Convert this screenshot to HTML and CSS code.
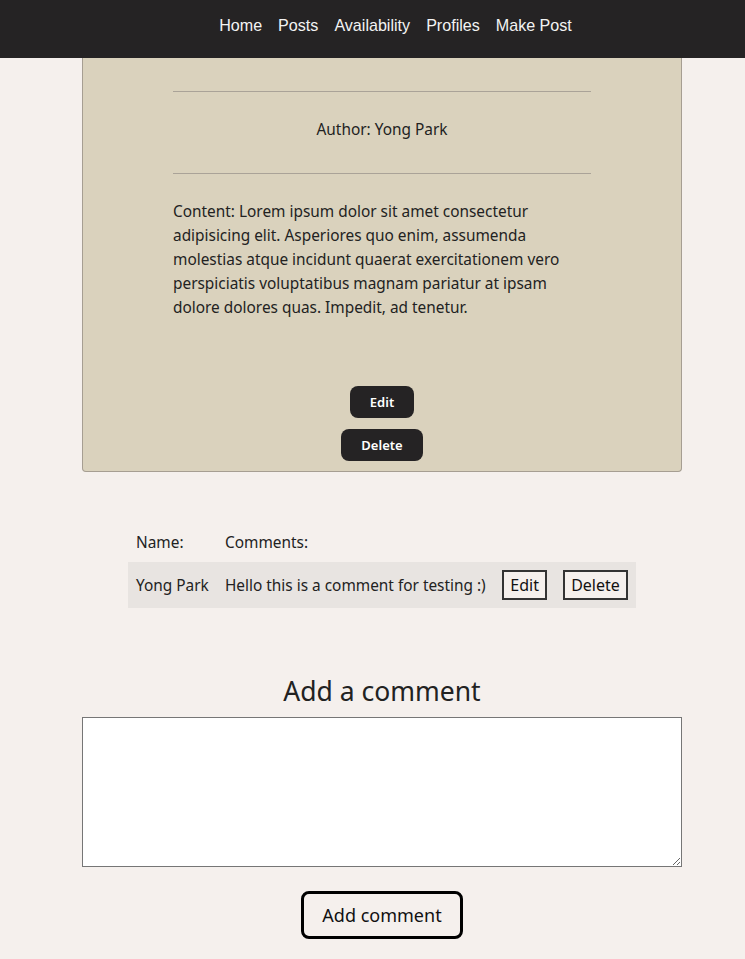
FILE: index.html
```html
<!DOCTYPE html>
<html>
<head>
<meta charset="utf-8">
<link rel="stylesheet" href="styles.css">
</head>
<body>
<nav class="nav">
  <a href="#">Home</a>
  <a href="#">Posts</a>
  <a href="#">Availability</a>
  <a href="#">Profiles</a>
  <a href="#">Make Post</a>
</nav>
<main class="main">
  <section class="card">
    <hr class="rule">
    <p class="author">Author: Yong Park</p>
    <hr class="rule">
    <p class="content">Content: Lorem ipsum dolor sit amet consectetur adipisicing elit. Asperiores quo enim, assumenda molestias atque incidunt quaerat exercitationem vero perspiciatis voluptatibus magnam pariatur at ipsam dolore dolores quas. Impedit, ad tenetur.</p>
    <div class="card-actions">
      <button class="dark-btn">Edit</button>
      <button class="dark-btn">Delete</button>
    </div>
  </section>
  <table class="comments">
    <thead>
      <tr><th>Name:</th><th>Comments:</th><th></th><th></th></tr>
    </thead>
    <tbody>
      <tr class="crow">
        <td>Yong Park</td>
        <td>Hello this is a comment for testing :)</td>
        <td><button class="small-btn">Edit</button></td>
        <td><button class="small-btn">Delete</button></td>
      </tr>
    </tbody>
  </table>
  <h2 class="add-title">Add a comment</h2>
  <textarea class="box"></textarea>
  <button class="add-btn">Add comment</button>
</main>
</body>
</html>
```
FILE: styles.css
```css
html, body {
  margin: 0;
  padding: 0;
}
body {
  background: #f5f0ed;
  font-family: "Noto Sans", "Open Sans", sans-serif;
  color: #222;
}
.nav {
  height: 58px;
  background: #252324;
  display: flex;
  justify-content: center;
  align-items: center;
  gap: 16px;
  padding: 0 0 8px 46px;
  box-sizing: border-box;
  font-family: "Liberation Sans", Arial, sans-serif;
}
.nav a {
  color: #f3f3f3;
  text-decoration: none;
  font-size: 16.1px;
}
.main {
  display: flex;
  flex-direction: column;
  align-items: center;
  padding-left: 19px;
}
.card {
  width: 600px;
  box-sizing: border-box;
  background: #dad2bd;
  border: 1px solid #a69e92;
  border-top: none;
  border-radius: 0 0 4px 4px;
  padding: 33px 90px 10px;
  display: flex;
  flex-direction: column;
}
.rule {
  border: none;
  border-top: 1px solid #aaa398;
  margin: 0;
  width: 100%;
}
.author {
  margin: 0;
  padding: 28px 0 34px;
  text-align: center;
  font-size: 15.4px;
  line-height: 19px;
}
.content {
  margin: 26px 0 0;
  font-size: 15.4px;
  line-height: 24px;
}
.card-actions {
  margin-top: 66px;
  display: flex;
  flex-direction: column;
  align-items: center;
  gap: 11px;
}
.dark-btn {
  background: #252324;
  color: #fff;
  border: none;
  border-radius: 8px;
  font-family: inherit;
  font-size: 13px;
  font-weight: 600;
  height: 32px;
  padding: 0 20px;
}
.comments {
  margin-top: 52px;
  border-collapse: collapse;
  font-size: 15.4px;
  width: 508px;
}
.comments th {
  text-align: left;
  font-weight: normal;
  padding: 8px 8px 9px;
}
.comments td {
  padding: 8px;
  white-space: nowrap;
}
.crow {
  background: #e8e4e1;
}
.small-btn {
  font-family: inherit;
  font-size: 16px;
  color: #111;
  background: #f5f0ed;
  border: 2px solid #333;
  padding: 2px 6px;
}
.add-title {
  margin: 65px 0 8px;
  font-weight: normal;
  font-size: 26.5px;
  line-height: 36px;
}
.box {
  width: 600px;
  height: 150px;
  box-sizing: border-box;
  border: 1px solid #767676;
  background: #fff;
}
.add-btn {
  margin-top: 24px;
  width: 162px;
  height: 48px;
  border: 3px solid #000;
  border-radius: 8px;
  background: #f5f0ed;
  font-family: inherit;
  font-size: 18px;
  color: #111;
}
```
